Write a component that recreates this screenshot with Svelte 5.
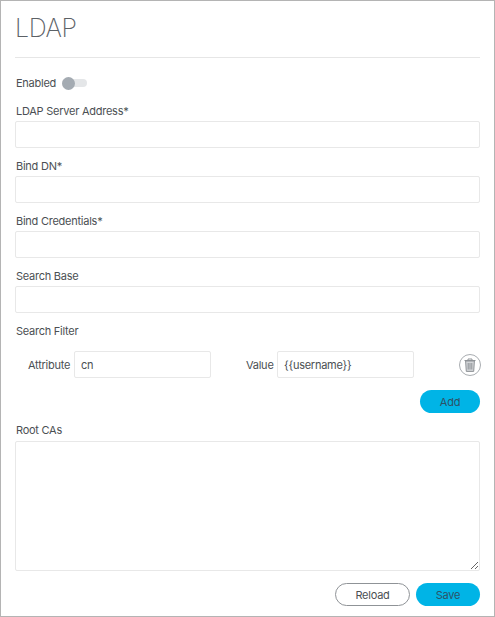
<script>
  const fields = ['LDAP Server Address*', 'Bind DN*', 'Bind Credentials*', 'Search Base'];
</script>

<div class="page">
  <h1>LDAP</h1>
  <hr />
  <div class="enabled">
    <span class="text">Enabled</span>
    <span class="toggle"><span class="knob"></span></span>
  </div>
  <div class="fields">
    {#each fields as f}
      <div class="field">
        <div class="label">{f}</div>
        <div class="box"></div>
      </div>
    {/each}
  </div>
  <div class="label filter">Search Filter</div>
  <div class="row">
    <span class="attr">Attribute</span>
    <input class="small" value="cn" />
    <span class="val">Value</span>
    <input class="small" value={'{{username}}'} />
    <button class="trash" aria-label="Delete">
      <svg width="12" height="14" viewBox="0 0 12 14" fill="none" stroke="#8f9397" stroke-width="1">
        <path d="M.5 2.5h11M4 2.5V1h4v1.5" />
        <path d="M1.6 3l.7 10.4h7.4L10.4 3z" fill="#d3d5d8" />
        <path d="M4.2 5v6.5M6 5v6.5M7.8 5v6.5" />
      </svg>
    </button>
  </div>
  <div class="addrow"><button class="primary add">Add</button></div>
  <div class="label roots">Root CAs</div>
  <textarea></textarea>
  <div class="actions">
    <button class="secondary">Reload</button>
    <button class="primary save">Save</button>
  </div>
</div>

<style>
  :global(body) { margin: 0; background: #fff; }
  .page {
    box-sizing: border-box;
    width: 495px;
    height: 617px;
    border: 1px solid #b4b4b4;
    padding: 0 14px;
    font-family: Inter, "Liberation Sans", sans-serif;
    font-size: 11px;
    letter-spacing: -0.25px;
    color: #4b4f53;
    display: flex;
    flex-direction: column;
    overflow: hidden;
  }
  h1 {
    margin: 11px 0 0;
    font-size: 25px;
    line-height: 33px;
    font-weight: 200;
    letter-spacing: -0.4px;
    color: #5c6166;
  }
  hr {
    width: 100%;
    margin: 12px 0 0;
    border: 0;
    border-top: 1px solid #e6e6e6;
  }
  .enabled {
    display: flex;
    align-items: center;
    gap: 6px;
    margin-top: 18px;
    height: 14px;
  }
  .text { padding-left: 1px; }
  .toggle {
    position: relative;
    flex: none;
    width: 25px;
    height: 8px;
    border-radius: 4px;
    background: #e4e6e8;
  }
  .knob {
    position: absolute;
    left: 0;
    top: -2.5px;
    width: 13px;
    height: 13px;
    border-radius: 50%;
    background: #a4abb2;
  }
  .fields {
    display: flex;
    flex-direction: column;
    gap: 11px;
    margin-top: 14px;
  }
  .label { line-height: 15px; height: 15px; padding-left: 1px; }
  .box {
    box-sizing: border-box;
    margin-top: 2px;
    height: 27px;
    border: 1px solid #e8e8e8;
    border-radius: 2px;
  }
  .filter { margin-top: 11px; }
  .row {
    display: flex;
    align-items: center;
    margin-top: 12px;
    height: 27px;
  }
  .attr { width: 46px; margin-left: 13px; }
  .small {
    box-sizing: border-box;
    flex: none;
    width: 137px;
    height: 27px;
    border: 1px solid #e8e8e8;
    border-radius: 2px;
    padding: 0 6px;
    font: inherit;
    letter-spacing: inherit;
    color: #4b4f53;
    outline: none;
  }
  .val { width: 31px; margin-left: 35px; }
  .trash {
    box-sizing: border-box;
    flex: none;
    width: 22px;
    height: 22px;
    margin-left: auto;
    margin-right: -1px;
    padding: 0;
    border: 1px solid #a9adb1;
    border-radius: 50%;
    background: #fff;
    display: flex;
    align-items: center;
    justify-content: center;
  }
  .addrow {
    display: flex;
    justify-content: flex-end;
    margin-top: 12px;
  }
  button.primary, button.secondary {
    box-sizing: border-box;
    height: 23px;
    border-radius: 12px;
    font: inherit;
    letter-spacing: inherit;
    padding: 0;
  }
  .primary {
    border: 0;
    background: #00b4e6;
    color: #2d5266;
  }
  .add { width: 60px; }
  .save { width: 64px; }
  .secondary {
    width: 75px;
    border: 1px solid #8f9397;
    background: #fff;
    color: #4b4f53;
  }
  .roots { margin-top: 10px; }
  textarea {
    box-sizing: border-box;
    display: block;
    width: 100%;
    height: 130px;
    margin-top: 3px;
    border: 1px solid #e8e8e8;
    border-radius: 2px;
    outline: none;
    flex: none;
  }
  .actions {
    display: flex;
    justify-content: flex-end;
    gap: 6px;
    margin-top: 12px;
  }
</style>
